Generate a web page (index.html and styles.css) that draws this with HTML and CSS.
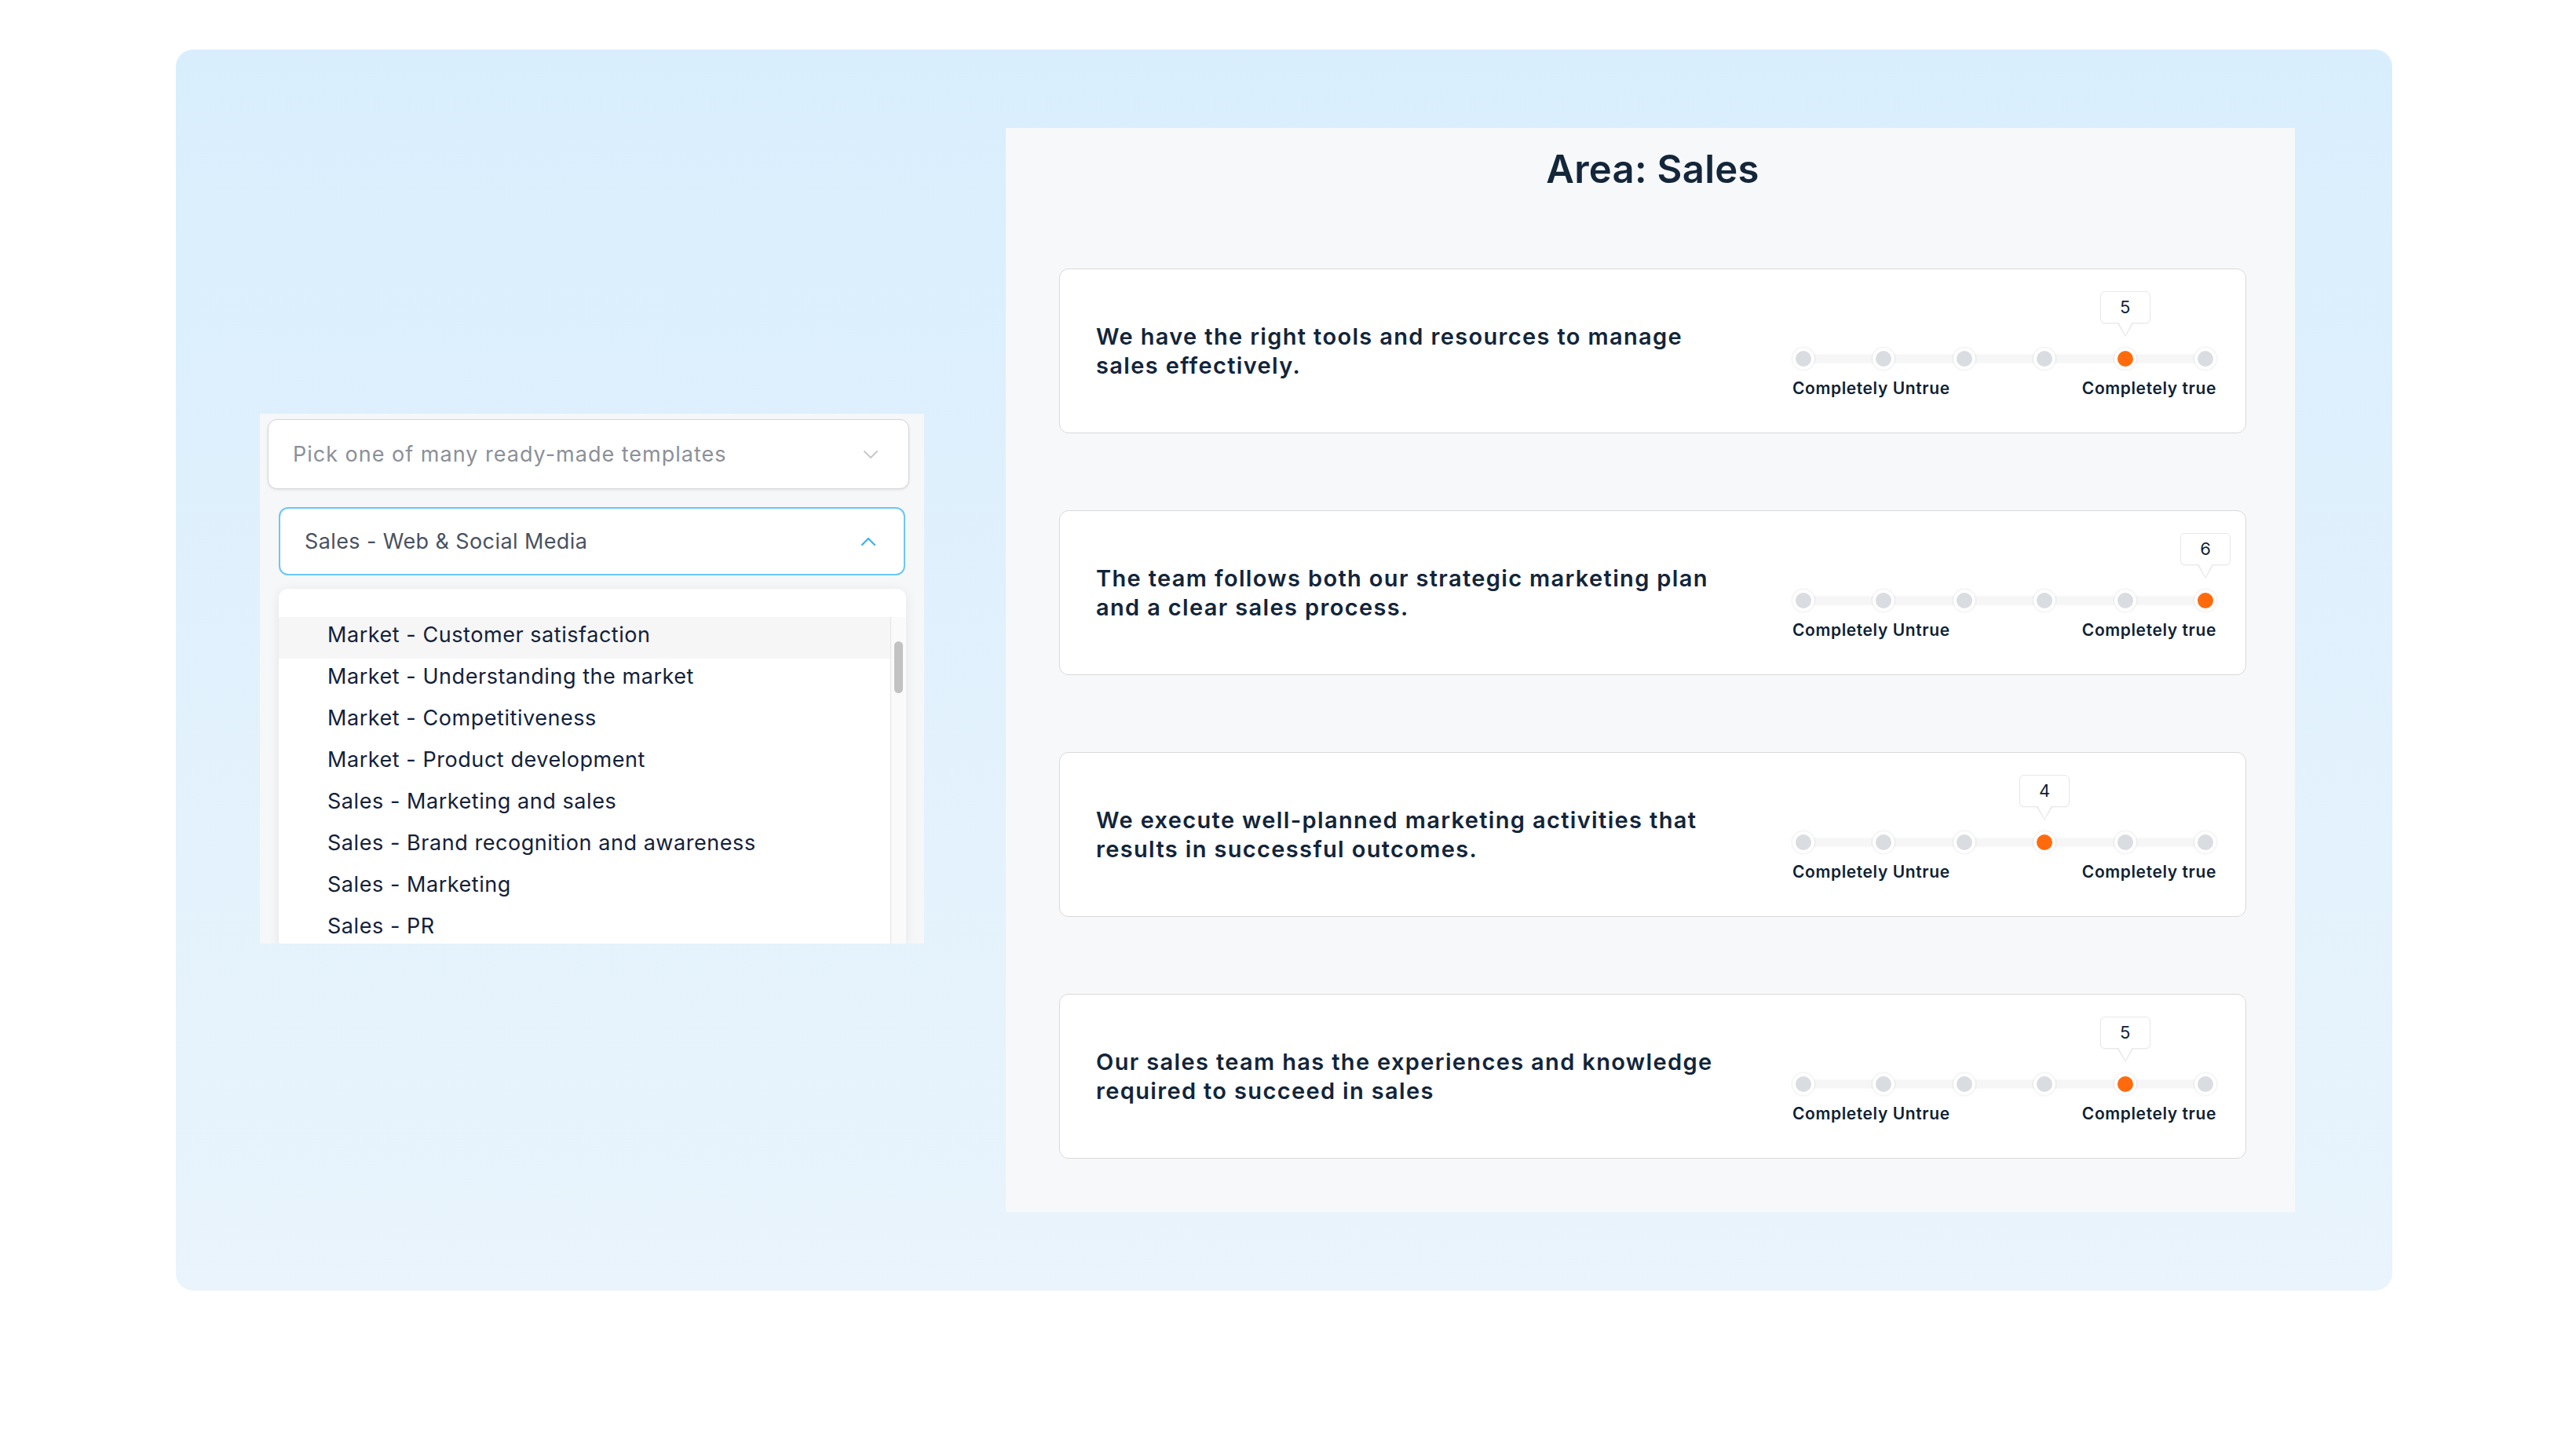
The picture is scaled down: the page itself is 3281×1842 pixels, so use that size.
FILE: index.html
```html
<!DOCTYPE html>
<html lang="en">
<head>
  <meta charset="UTF-8" />
  <meta name="viewport" content="width=device-width, initial-scale=1.0"/>
  <title>Area: Sales</title>
  <link rel="stylesheet" href="styles.css">
</head>
<body>
  <div class="frame">

    <div class="picker">
      <div class="select">
        <span class="placeholder">Pick one of many ready-made templates</span>
        <svg class="chevron" width="18" height="10" viewBox="0 0 18 10"><polyline points="1,1 9,9 17,1" fill="none" stroke="#c6c8cc" stroke-width="2" stroke-linecap="round" stroke-linejoin="round"/></svg>
      </div>

      <div class="select select-open">
        <span class="value">Sales - Web &amp; Social Media</span>
        <svg class="chevron" width="18" height="10" viewBox="0 0 18 10"><polyline points="1,9 9,1 17,9" fill="none" stroke="#3fb4f4" stroke-width="2.4" stroke-linecap="round" stroke-linejoin="round"/></svg>
      </div>

      <div class="dropdown">
        <div class="options">
          <ul class="option-list">
            <li class="hover">Market - Customer satisfaction</li>
            <li>Market - Understanding the market</li>
            <li>Market - Competitiveness</li>
            <li>Market - Product development</li>
            <li>Sales - Marketing and sales</li>
            <li>Sales - Brand recognition and awareness</li>
            <li>Sales - Marketing</li>
            <li>Sales - PR</li>
          </ul>
          <div class="scrollbar"><div class="thumb"></div></div>
        </div>
      </div>
    </div>

    <div class="survey">
      <h1>Area: Sales</h1>

      <div class="question">
        <p>We have the right tools and resources to manage sales effectively.</p>
        <div class="scale">
          <div class="dots">
            <span class="dot"></span>
            <span class="dot"></span>
            <span class="dot"></span>
            <span class="dot"></span>
            <span class="dot active"><span class="tip">5</span></span>
            <span class="dot"></span>
          </div>
          <div class="labels"><span>Completely Untrue</span><span>Completely true</span></div>
        </div>
      </div>

      <div class="question">
        <p>The team follows both our strategic marketing plan and a clear sales process.</p>
        <div class="scale">
          <div class="dots">
            <span class="dot"></span>
            <span class="dot"></span>
            <span class="dot"></span>
            <span class="dot"></span>
            <span class="dot"></span>
            <span class="dot active"><span class="tip">6</span></span>
          </div>
          <div class="labels"><span>Completely Untrue</span><span>Completely true</span></div>
        </div>
      </div>

      <div class="question">
        <p>We execute well-planned marketing activities that results in successful outcomes.</p>
        <div class="scale">
          <div class="dots">
            <span class="dot"></span>
            <span class="dot"></span>
            <span class="dot"></span>
            <span class="dot active"><span class="tip">4</span></span>
            <span class="dot"></span>
            <span class="dot"></span>
          </div>
          <div class="labels"><span>Completely Untrue</span><span>Completely true</span></div>
        </div>
      </div>

      <div class="question">
        <p>Our sales team has the experiences and knowledge required to succeed in sales</p>
        <div class="scale">
          <div class="dots">
            <span class="dot"></span>
            <span class="dot"></span>
            <span class="dot"></span>
            <span class="dot"></span>
            <span class="dot active"><span class="tip">5</span></span>
            <span class="dot"></span>
          </div>
          <div class="labels"><span>Completely Untrue</span><span>Completely true</span></div>
        </div>
      </div>
    </div>

  </div>
</body>
</html>
```

FILE: styles.css
```css
body {
  font-family: Inter, "Noto Sans", sans-serif;
  margin: 0;
  padding: 0;
  background: #fff;
  color: #12253a;
}
.frame {
  display: flex;
  align-items: flex-start;
  width: 2823px;
  height: 1581px;
  margin: 63px 0 0 224px;
  border-radius: 22px;
  background: linear-gradient(180deg, #d9eefd 0%, #e9f4fc 100%);
}

/* left: template picker */
.picker {
  width: 846px;
  height: 675px;
  margin: 464px 0 0 107px;
  padding-top: 7px;
  box-sizing: border-box;
  background: #f5f7f9;
  overflow: hidden;
}
.select {
  display: flex;
  align-items: center;
  justify-content: space-between;
  width: 817px;
  height: 89px;
  margin-left: 10px;
  padding: 0 39px 0 31px;
  box-sizing: border-box;
  background: #fff;
  border: 1px solid #d6d6d6;
  border-radius: 12px;
  box-shadow: 0 1px 3px rgba(0,0,0,0.1);
  font-size: 27px;
}
.placeholder { color: #8b9099; letter-spacing: 1px; }
.select-open {
  width: 798px;
  height: 87px;
  margin: 23px 0 0 24px;
  padding-right: 36px;
  border: 2px solid #6cc6f7;
  box-shadow: none;
}
.value { color: #4a5261; letter-spacing: 0.4px; }
.dropdown {
  width: 799px;
  margin: 17px 0 0 24px;
  padding-top: 36px;
  background: #fff;
  border-radius: 12px;
  box-shadow: 0 2px 14px rgba(0,0,0,0.08);
}
.options { display: flex; }
.option-list {
  flex: 1;
  list-style: none;
  margin: 0;
  padding: 0;
}
.option-list li {
  height: 53px;
  line-height: 46px;
  padding-left: 62px;
  font-size: 27px;
  letter-spacing: 0.55px;
  color: #13213a;
}
.option-list li.hover { background: #f6f6f6; }
.scrollbar {
  width: 19px;
  border-left: 1px solid #e4e4e4;
  background: #fafafa;
}
.thumb {
  width: 11px;
  height: 66px;
  margin: 31px 0 0 4px;
  border-radius: 6px;
  background: #c2c2c2;
}

/* right: survey area */
.survey {
  width: 1642px;
  height: 1381px;
  margin: 100px 0 0 104px;
  padding: 24px 62px 0 68px;
  box-sizing: border-box;
  background: #f7f8fa;
}
h1 {
  margin: 0 0 97px;
  font-size: 49px;
  line-height: 58px;
  font-weight: 600;
  letter-spacing: 0.3px;
  text-align: center;
  color: #13263a;
}
.question {
  display: flex;
  align-items: center;
  justify-content: space-between;
  height: 210px;
  margin-bottom: 98px;
  padding: 0 37px 0 46px;
  box-sizing: border-box;
  background: #fff;
  border: 1px solid #d9d9d9;
  border-radius: 12px;
}
.question p {
  width: 800px;
  margin: 0;
  font-size: 29px;
  line-height: 37px;
  font-weight: 600;
  letter-spacing: 1.35px;
}
.scale {
  width: 540px;
  padding: 72px 0 16px;
}
.dots {
  position: relative;
  display: flex;
  justify-content: space-between;
}
.dots::before {
  content: "";
  position: absolute;
  left: 14px;
  right: 14px;
  top: 9px;
  height: 10px;
  background: #f6f6f6;
  box-shadow: 0 0 2px rgba(0,0,0,0.08);
}
.dot {
  position: relative;
  width: 20px;
  height: 20px;
  border: 4px solid #fff;
  border-radius: 50%;
  background: #d9dce0;
  box-shadow: 0 0 3px rgba(0,0,0,0.14);
}
.dot.active { background: #ff6b0c; }
.tip {
  position: absolute;
  bottom: 55px;
  left: 50%;
  width: 64px;
  height: 41px;
  margin-left: -32px;
  box-sizing: border-box;
  background: #fff;
  border: 1px solid #e8e8e8;
  border-radius: 6px;
  box-shadow: 0 1px 2px rgba(0,0,0,0.04);
  font-size: 22px;
  line-height: 39px;
  text-align: center;
  color: #0f1f33;
}
.tip::before,
.tip::after {
  content: "";
  position: absolute;
  left: 50%;
  margin-left: -10px;
  border-left: 10px solid transparent;
  border-right: 10px solid transparent;
}
.tip::before { top: 40px; border-top: 17px solid #e8e8e8; }
.tip::after { top: 38px; margin-left: -9px; border-left-width: 9px; border-right-width: 9px; border-top: 17px solid #fff; }
.labels {
  display: flex;
  justify-content: space-between;
  margin-top: 11px;
  font-size: 21px;
  font-weight: 600;
  letter-spacing: 0.6px;
  color: #0f1f33;
}
```
